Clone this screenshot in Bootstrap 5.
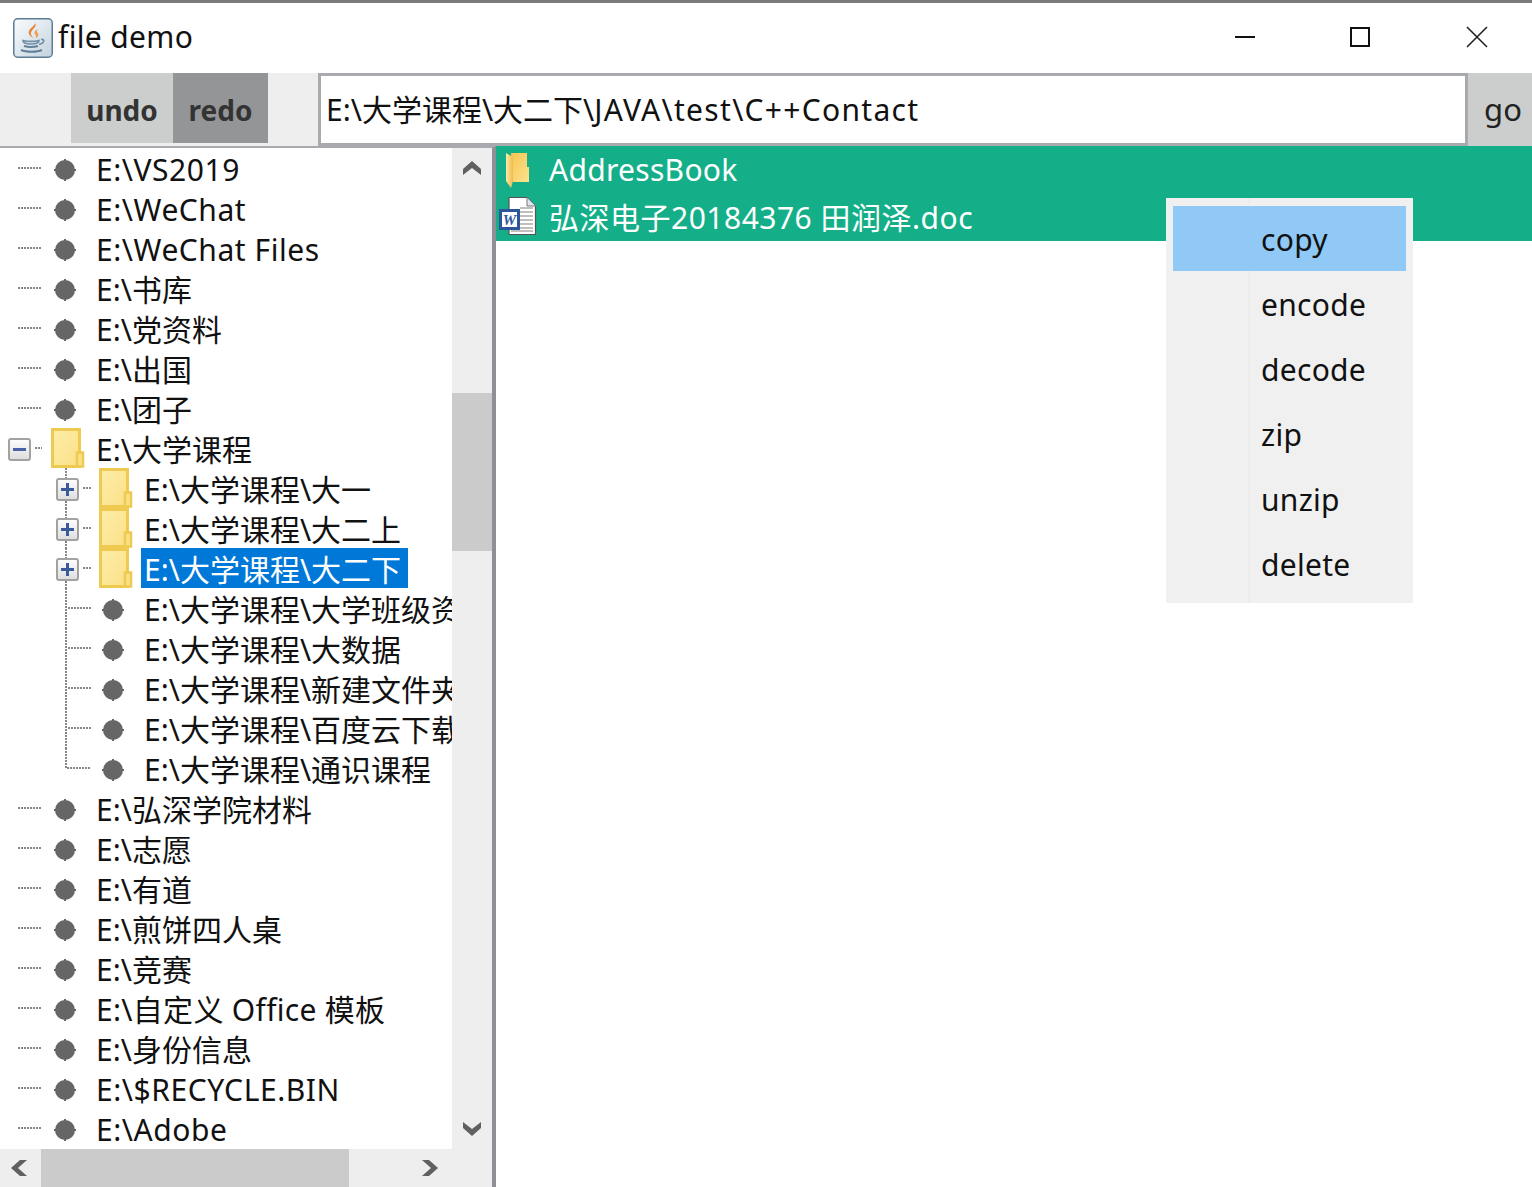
<!DOCTYPE html>
<html lang="zh">

<head>
  <meta charset="UTF-8">
  <title>file demo</title>
  <link rel="stylesheet" href="https://cdn.jsdelivr.net/npm/bootstrap@5.3.0/dist/css/bootstrap.min.css">
  <style>
    html, body { height: 100%; overflow: hidden; }
    body {
      font-family: "Noto Sans", "Noto Sans CJK SC", sans-serif;
      font-size: 30px;
      color: #111;
      background: #fff;
    }
    svg { display: block; flex: none; }

    .app-window { height: 1187px; position: relative; }

    .title-bar { height: 73px; border-top: 3px solid #7a7a7a; padding-left: 13px; }
    .title-text { margin-left: 5px; line-height: 1; position: relative; top: -1px; letter-spacing: .35px; }
    .win-btn { width: 115px; height: 70px; }
    .win-btn svg { margin: auto; position: relative; top: -1px; }
    .win-close svg { left: 2px; }

    .tool-bar { height: 73px; background: #eee; padding-left: 71px; }
    .tool-btn { font-size: 28px; font-weight: 700; color: #333; height: 70px; border-radius: 0; border: 0; padding: 3px 0 0; }
    .tool-btn:hover { color: #333; }
    .undo-btn { width: 102px; background: #cccecd; }
    .undo-btn:hover { background: #cccecd; }
    .redo-btn { width: 95px; background: #939597; }
    .redo-btn:hover { background: #939597; }
    .path-input.form-control {
      margin-left: 50px;
      width: 1150px;
      flex: none;
      height: 73px;
      font-size: 30px;
      line-height: 67px;
      color: #111;
      border: 3px solid #a9a9b0;
      border-radius: 0;
      padding: 0 5px;
      white-space: nowrap;
    }
    .path-latin { letter-spacing: 1.3px; }
    .go-btn { width: 64px; height: 73px; background: #cccecd; font-weight: 400; color: #222; font-size: 31px; padding: 0 0 0 6px; }
    .go-btn:hover { background: #cccecd; color: #222; }

    .work-area { height: 1041px; }
    .left-pane { width: 496px; border-right: 4px solid #8f9096; border-top: 2px solid #a9a9b0; }
    .tree-body { height: 1001px; }
    .tree-view { width: 452px; overflow: hidden; }
    .tree-row { height: 40px; white-space: nowrap; line-height: 40px; }
    .tree-row span { padding: 0 4px; margin-left: -5px; position: relative; top: 2px; height: 40px; }
    .tree-row .tree-sel { background: #0078d7; color: #fff; top: 0; margin-left: -4px; padding: 2px 7px 0 3px; }
    .tree-row .latin-name { letter-spacing: .55px; }
    .tree-row .mixed-name { letter-spacing: .3px; }

    .scroll-v { width: 40px; background: #eee; }
    .scroll-h { height: 38px; background: #eee; }
    .scroll-thumb { background: #cbcbcb; }
    .thumb-v { height: 158px; margin-top: 205px; }
    .thumb-h { width: 308px; height: 38px; }
    .scroll-end { height: 40px; }
    .scroll-v .scroll-end:last-child { margin-top: auto; }
    .scroll-cap { width: 41px; padding-left: 10px; }
    .scroll-right { margin-right: 53px; }

    .right-pane { min-width: 0; }
    .file-list { background: #14af88; color: #fff; height: 95px; }
    .file-row { height: 48px; }
    .file-row:last-child { height: 47px; }
    .file-icon { width: 53px; }
    .file-row svg { margin-left: 3px; }
    .file-row .doc-svg { margin-top: -4px; }
    .folder-name { position: relative; top: -1px; letter-spacing: .3px; }
    .doc-name { letter-spacing: .5px; }

    .ctx-menu.dropdown-menu {
      display: block;
      position: absolute;
      left: 1166px;
      top: 198px;
      width: 247px;
      height: 405px;
      padding: 8px 7px;
      margin: 0;
      background: linear-gradient(90deg, #f0f0f0 82px, #ececec 82px, #ececec 84px, #f0f0f0 84px);
      border: 0;
      border-radius: 0;
      font-size: 30px;
    }
    .ctx-menu .dropdown-item { height: 65px; line-height: 67px; padding: 0 0 0 88px; color: #111; letter-spacing: .3px; }
    .ctx-menu .dropdown-item.ctx-active { background: #90c8f6; }
  </style>
</head>

<body>
  <svg width="0" height="0" class="position-absolute">
    <defs>
      <linearGradient id="folderFill" x1="0" y1="0" x2="1" y2="1">
        <stop offset="0" stop-color="#feeea8" />
        <stop offset="1" stop-color="#fbdf88" />
      </linearGradient>
      <linearGradient id="boxFill" x1="0" y1="0" x2="0" y2="1">
        <stop offset="0" stop-color="#fff" />
        <stop offset="1" stop-color="#dcdcdc" />
      </linearGradient>
      <linearGradient id="leafFill" x1="0" y1="0" x2="1" y2="0">
        <stop offset="0" stop-color="#fdeaa8" />
        <stop offset="1" stop-color="#eebb48" />
      </linearGradient>
      <linearGradient id="backFill" x1="0" y1="0" x2="1" y2="1">
        <stop offset="0" stop-color="#f5c452" />
        <stop offset="1" stop-color="#fde38e" />
      </linearGradient>
      <g id="bullet">
        <path d="M0 -11V11M-11 0H11" stroke="#666" stroke-width="2" />
        <circle r="10" fill="#666" />
      </g>
      <g id="folder">
        <rect x="1.5" y="1.5" width="27" height="37" fill="url(#folderFill)" stroke="#eecb50" stroke-width="3" />
        <rect x="26" y="24.5" width="6" height="14" fill="#fbe08a" stroke="#eecb50" stroke-width="2.5" />
      </g>
      <g id="expander">
        <rect x="1" y="1" width="21" height="21" rx="2" fill="url(#boxFill)" stroke="#a2a2a2" stroke-width="2" />
      </g>
      <!-- filas del arbol -->
      <symbol id="rootLeaf" viewBox="0 0 97 40">
        <path d="M18 20H41" stroke="#888" stroke-width="2" stroke-dasharray="2 1" />
        <use href="#bullet" x="65" y="22" />
      </symbol>
      <symbol id="rootOpen" viewBox="0 0 97 40">
        <use href="#expander" x="8" y="10" />
        <path d="M13 21.5H26" stroke="#4a62a8" stroke-width="3" />
        <path d="M35 20H42" stroke="#888" stroke-width="2" stroke-dasharray="2 1" />
        <use href="#folder" x="51" y="0" />
      </symbol>
      <symbol id="childClosed" viewBox="0 0 145 40">
        <path d="M66 0V10M66 33V40" stroke="#888" stroke-width="2" stroke-dasharray="2 1" />
        <use href="#expander" x="56" y="10" />
        <path d="M61 21.5H74M67.5 15V28" stroke="#3b5a9a" stroke-width="3" />
        <path d="M83 20H91" stroke="#888" stroke-width="2" stroke-dasharray="2 1" />
        <use href="#folder" x="99" y="0" />
      </symbol>
      <symbol id="childLeaf" viewBox="0 0 145 40">
        <path d="M66 0V40M68 20H91" stroke="#888" stroke-width="2" stroke-dasharray="2 1" />
        <use href="#bullet" x="113" y="22" />
      </symbol>
      <symbol id="childLast" viewBox="0 0 145 40">
        <path d="M66 0V20H91" fill="none" stroke="#888" stroke-width="2" stroke-dasharray="2 1" />
        <use href="#bullet" x="113" y="22" />
      </symbol>
    </defs>
  </svg>

  <div class="app-window d-flex flex-column">
    <!-- barra de titulo -->
    <div class="title-bar d-flex align-items-center">
      <svg width="40" height="40" viewBox="0 0 40 40">
        <defs>
          <linearGradient id="javaBg" x1="0" y1="0" x2="1" y2="1">
            <stop offset="0" stop-color="#fbfcfd" />
            <stop offset="1" stop-color="#c3d3df" />
          </linearGradient>
        </defs>
        <rect x=".75" y=".75" width="38.5" height="38.5" rx="4" fill="url(#javaBg)" stroke="#5c7d94" stroke-width="1.5" />
        <path d="M22 5c3 4-5 7-4 11 .4 1.6 1.5 3 2.5 4-4-2-6-5-4-8 1.5-2.5 5-4 5.5-7z" fill="#e8873a" />
        <path d="M25 11c-4 2-4 4-2.500 6 .8 1.100.8 2.200 0 3.500 3.500-2 3.500-4 1.800-6-.9-1.200-.4-2.300.7-3.500z" fill="#ee9f55" />
        <path d="M10 22.500c4 1.200 12 1.200 16 0 0 2.500-3 3.500-8 3.500s-8-1-8-3.500zM28 21.500c4-.8 4 3.500-2 5" fill="none" stroke="#6f8ea6" stroke-width="1.600" />
        <path d="M11 28c4 1.200 10 1.200 14 0M8 32c5 2.200 16 2.200 21 0" fill="none" stroke="#5f8098" stroke-width="2" />
      </svg>
      <div class="title-text">file demo</div>
      <div class="d-flex ms-auto">
        <div class="win-btn d-flex">
          <svg width="22" height="22" viewBox="0 0 22 22"><path d="M1 11H21" stroke="#111" stroke-width="2" /></svg>
        </div>
        <div class="win-btn d-flex">
          <svg width="22" height="22" viewBox="0 0 22 22"><rect x="2" y="2" width="18" height="18" fill="none" stroke="#111" stroke-width="2" /></svg>
        </div>
        <div class="win-btn win-close d-flex">
          <svg width="22" height="22" viewBox="0 0 22 22"><path d="M1 1L21 21M21 1L1 21" stroke="#222" stroke-width="1.6" /></svg>
        </div>
      </div>
    </div>

    <!-- barra de herramientas -->
    <div class="tool-bar d-flex align-items-start">
      <button type="button" class="btn tool-btn undo-btn">undo</button>
      <button type="button" class="btn tool-btn redo-btn">redo</button>
      <div class="form-control path-input" role="textbox">E:\大学课程\大二下\<span class="path-latin">JAVA\test\C++Contact</span></div>
      <button type="button" class="btn tool-btn go-btn">go</button>
    </div>

    <div class="work-area d-flex">
      <!-- panel izquierdo -->
      <div class="left-pane d-flex flex-column">
        <div class="tree-body d-flex">
          <div class="tree-view">
            <div class="tree-row d-flex"><svg width="97" height="40"><use href="#rootLeaf" /></svg><span class="latin-name">E:\VS2019</span></div>
            <div class="tree-row d-flex"><svg width="97" height="40"><use href="#rootLeaf" /></svg><span class="latin-name">E:\WeChat</span></div>
            <div class="tree-row d-flex"><svg width="97" height="40"><use href="#rootLeaf" /></svg><span class="latin-name">E:\WeChat Files</span></div>
            <div class="tree-row d-flex"><svg width="97" height="40"><use href="#rootLeaf" /></svg><span>E:\书库</span></div>
            <div class="tree-row d-flex"><svg width="97" height="40"><use href="#rootLeaf" /></svg><span>E:\党资料</span></div>
            <div class="tree-row d-flex"><svg width="97" height="40"><use href="#rootLeaf" /></svg><span>E:\出国</span></div>
            <div class="tree-row d-flex"><svg width="97" height="40"><use href="#rootLeaf" /></svg><span>E:\团子</span></div>
            <div class="tree-row d-flex"><svg width="97" height="40"><use href="#rootOpen" /></svg><span>E:\大学课程</span></div>
            <div class="tree-row d-flex"><svg width="145" height="40"><use href="#childClosed" /></svg><span>E:\大学课程\大一</span></div>
            <div class="tree-row d-flex"><svg width="145" height="40"><use href="#childClosed" /></svg><span>E:\大学课程\大二上</span></div>
            <div class="tree-row d-flex"><svg width="145" height="40"><use href="#childClosed" /></svg><span class="tree-sel">E:\大学课程\大二下</span></div>
            <div class="tree-row d-flex"><svg width="145" height="40"><use href="#childLeaf" /></svg><span>E:\大学课程\大学班级资料</span></div>
            <div class="tree-row d-flex"><svg width="145" height="40"><use href="#childLeaf" /></svg><span>E:\大学课程\大数据</span></div>
            <div class="tree-row d-flex"><svg width="145" height="40"><use href="#childLeaf" /></svg><span>E:\大学课程\新建文件夹</span></div>
            <div class="tree-row d-flex"><svg width="145" height="40"><use href="#childLeaf" /></svg><span>E:\大学课程\百度云下载</span></div>
            <div class="tree-row d-flex"><svg width="145" height="40"><use href="#childLast" /></svg><span>E:\大学课程\通识课程</span></div>
            <div class="tree-row d-flex"><svg width="97" height="40"><use href="#rootLeaf" /></svg><span>E:\弘深学院材料</span></div>
            <div class="tree-row d-flex"><svg width="97" height="40"><use href="#rootLeaf" /></svg><span>E:\志愿</span></div>
            <div class="tree-row d-flex"><svg width="97" height="40"><use href="#rootLeaf" /></svg><span>E:\有道</span></div>
            <div class="tree-row d-flex"><svg width="97" height="40"><use href="#rootLeaf" /></svg><span>E:\煎饼四人桌</span></div>
            <div class="tree-row d-flex"><svg width="97" height="40"><use href="#rootLeaf" /></svg><span>E:\竞赛</span></div>
            <div class="tree-row d-flex"><svg width="97" height="40"><use href="#rootLeaf" /></svg><span class="mixed-name">E:\自定义 Office 模板</span></div>
            <div class="tree-row d-flex"><svg width="97" height="40"><use href="#rootLeaf" /></svg><span>E:\身份信息</span></div>
            <div class="tree-row d-flex"><svg width="97" height="40"><use href="#rootLeaf" /></svg><span class="latin-name">E:\$RECYCLE.BIN</span></div>
            <div class="tree-row d-flex"><svg width="97" height="40"><use href="#rootLeaf" /></svg><span class="latin-name">E:\Adobe</span></div>
          </div>
          <!-- scroll vertical -->
          <div class="scroll-v d-flex flex-column">
            <div class="scroll-end d-flex align-items-center justify-content-center">
              <svg width="20" height="16" viewBox="0 0 20 16"><path d="M10 1L19 9V15L10 8L1 15V9Z" fill="#606060" /></svg>
            </div>
            <div class="scroll-thumb thumb-v"></div>
            <div class="scroll-end d-flex align-items-center justify-content-center">
              <svg width="20" height="16" viewBox="0 0 20 16"><path d="M10 15L19 7V1L10 8L1 1V7Z" fill="#606060" /></svg>
            </div>
          </div>
        </div>
        <!-- scroll horizontal -->
        <div class="scroll-h d-flex align-items-center">
          <div class="scroll-cap d-flex">
            <svg width="18" height="18" viewBox="0 0 18 18"><path d="M1 9L10 1H17L8 9L17 17H10Z" fill="#606060" /></svg>
          </div>
          <div class="scroll-thumb thumb-h"></div>
          <div class="ms-auto d-flex scroll-right">
            <svg width="18" height="18" viewBox="0 0 18 18"><path d="M17 9L8 1H1L10 9L1 17H8Z" fill="#606060" /></svg>
          </div>
        </div>
      </div>

      <!-- panel derecho -->
      <div class="right-pane flex-grow-1">
        <div class="file-list">
          <div class="file-row d-flex align-items-center">
            <div class="file-icon">
              <svg width="36" height="36" viewBox="0 0 36 36">
                <path d="M12 1H28V15H30V30H14Z" fill="url(#backFill)" />
                <path d="M7 1L14 5V29L12 36L7 29Z" fill="url(#leafFill)" />
              </svg>
            </div>
            <div class="folder-name">AddressBook</div>
          </div>
          <div class="file-row d-flex align-items-center">
            <div class="file-icon">
              <svg width="40" height="40" viewBox="0 0 40 40" class="doc-svg">
                <path d="M10 1.5H28L36.5 10V38.5H10Z" fill="#fff" stroke="#555" stroke-width="1.2" />
                <path d="M28 1.5V10H36.5" fill="#dfe5ec" stroke="#777" />
                <path d="M21 12H34M21 16H34M21 20H34M21 24H34M21 28H34M12 32H34M12 35H34" stroke="#aaa" stroke-width="1.5" />
                <rect x="1.5" y="14.5" width="18" height="18" fill="#fff" stroke="#2b579a" stroke-width="3" />
                <text x="10.5" y="29" font-family="Liberation Serif, serif" font-size="15" font-weight="700" font-style="italic" text-anchor="middle" fill="#2b579a">W</text>
              </svg>
            </div>
            <div class="doc-name">弘深电子20184376 田润泽.doc</div>
          </div>
        </div>
      </div>
    </div>

    <!-- menu contextual -->
    <ul class="dropdown-menu ctx-menu">
      <li><a class="dropdown-item ctx-active" href="#">copy</a></li>
      <li><a class="dropdown-item" href="#">encode</a></li>
      <li><a class="dropdown-item" href="#">decode</a></li>
      <li><a class="dropdown-item" href="#">zip</a></li>
      <li><a class="dropdown-item" href="#">unzip</a></li>
      <li><a class="dropdown-item" href="#">delete</a></li>
    </ul>
  </div>

  <script src="https://cdn.jsdelivr.net/npm/bootstrap@5.3.0/dist/js/bootstrap.bundle.min.js"></script>
</body>

</html>
